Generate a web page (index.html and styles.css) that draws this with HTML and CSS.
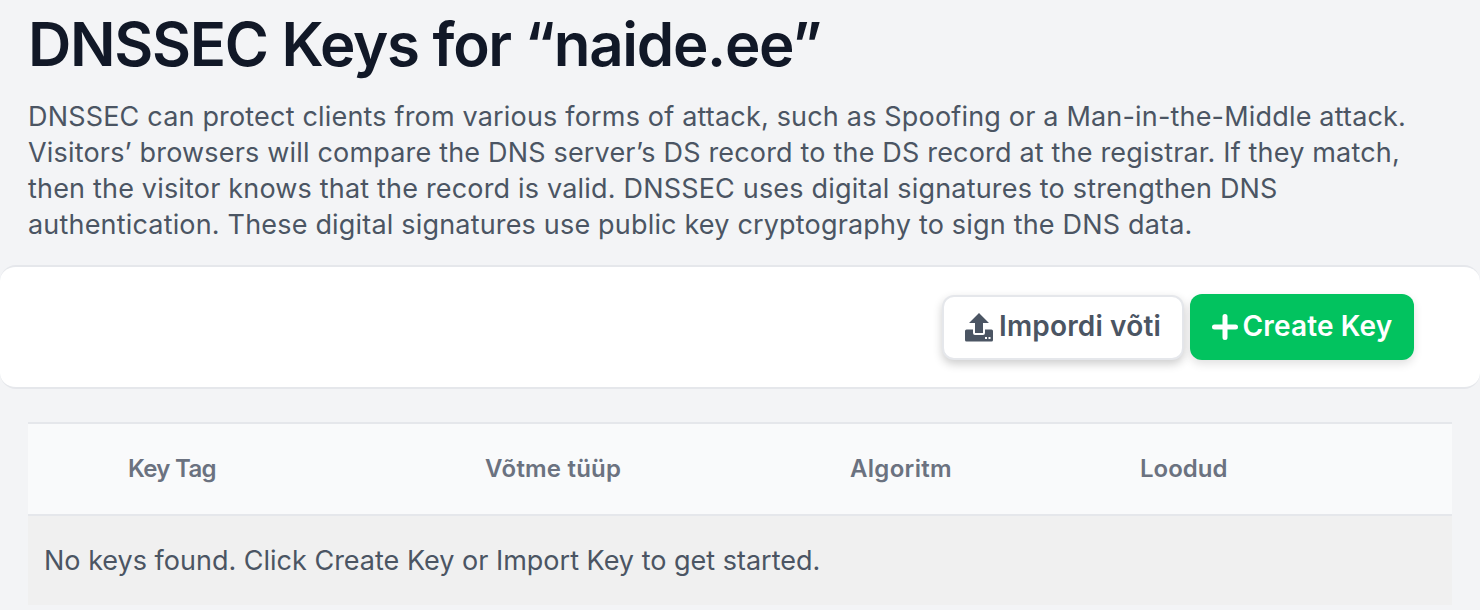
FILE: index.html
```html
<!DOCTYPE html>
<html lang="en">
<head>
<meta charset="utf-8">
<title>DNSSEC Keys</title>
<link rel="stylesheet" href="styles.css">
</head>
<body>
<header class="intro">
  <h1 class="title">DNSSEC Keys for “naide.ee”</h1>
  <p class="lead">DNSSEC can protect clients from various forms of attack, such as Spoofing or a Man-in-the-Middle attack.<br>Visitors’ browsers will compare the DNS server’s DS record to the DS record at the registrar. If they match,<br>then the visitor knows that the record is valid. DNSSEC uses digital signatures to strengthen DNS<br>authentication. These digital signatures use public key cryptography to sign the DNS data.</p>
</header>
<section class="toolbar">
  <button class="btn btn-light" type="button">
    <svg class="icon-upload" viewBox="0 0 28 29" aria-hidden="true"><path fill="#4b5563" d="M14 0 L24 10 L18 10 L18 20 L10 20 L10 10 L4 10 Z"/><path fill="#4b5563" fill-rule="evenodd" d="M1.5 16.5 H8 V20 Q8 22 10 22 H18 Q20 22 20 20 V16.5 H26.5 Q28 16.5 28 18 V27 Q28 28.5 26.5 28.5 H1.5 Q0 28.5 0 27 V18 Q0 16.5 1.5 16.5 Z M20 24 H22 V26 H20 Z M23.5 24 H25.5 V26 H23.5 Z"/></svg>
    <span>Impordi võti</span>
  </button>
  <button class="btn btn-green" type="button">
    <svg class="icon-plus" viewBox="0 0 26 26" aria-hidden="true"><path d="M13 2.5 V23.5 M2.5 13 H23.5" stroke="#fff" stroke-width="5" stroke-linecap="round" fill="none"/></svg>
    <span>Create Key</span>
  </button>
</section>
<section class="keys">
  <div class="keys-head">
    <div class="col col-tag">Key Tag</div>
    <div class="col col-type">Võtme tüüp</div>
    <div class="col col-algo">Algoritm</div>
    <div class="col col-date">Loodud</div>
  </div>
  <div class="keys-empty">No keys found. Click Create Key or Import Key to get started.</div>
</section>
</body>
</html>
```
FILE: styles.css
```css
* { box-sizing: border-box; }
html, body { margin: 0; height: 610px; overflow: hidden; }
body { background: #f3f4f6; font-family: Inter, "Noto Sans", sans-serif; color: #4b5563; }
.intro { padding: 8px 28px 0; height: 265px; }
.title { margin: 0; font-size: 60px; line-height: 72px; font-weight: 600; letter-spacing: -1.3px; color: #111827; }
.lead { margin: 19px 0 0; font-size: 27px; line-height: 36px; letter-spacing: .18px; color: #4b5563; white-space: nowrap; }
.toolbar { height: 124px; background: #fff; border: solid #e5e7eb; border-width: 2px 0; border-radius: 16px; display: flex; justify-content: flex-end; align-items: center; gap: 6px; padding-right: 66px; }
.btn { display: flex; align-items: center; height: 66px; border-radius: 12px; font-family: inherit; font-size: 28px; line-height: 34px; font-weight: 600; letter-spacing: .15px; cursor: pointer; }
.btn span { margin-bottom: 2px; }
.btn-light { width: 242px; height: 65px; justify-content: center; gap: 6px; padding: 0; background: #fff; color: #4b5563; border: 2px solid #e5e7eb; box-shadow: 0 4px 10px rgba(0,0,0,.2); }
.btn-green { width: 224px; justify-content: center; gap: 5px; padding: 0; background: #02c35f; color: #fff; border: 0; box-shadow: 0 4px 10px rgba(0,0,0,.12); }
.icon-upload { width: 28px; height: 29px; }
.icon-plus { width: 26px; height: 26px; }
.keys { margin: 33px 28px 0; }
.keys-head { height: 94px; padding-bottom: 2px; display: flex; align-items: center; background: #f9fafb; border-top: 2px solid #e5e7eb; border-bottom: 2px solid #e5e7eb; font-size: 24px; font-weight: 600; color: #6b7280; }
.col-tag { margin-left: 100px; width: 357px; letter-spacing: -.7px; }
.col-type { width: 365px; letter-spacing: .2px; }
.col-algo { width: 290px; letter-spacing: .3px; }
.keys-empty { height: 89px; padding: 0 16px; display: flex; align-items: center; background: #f0f0f0; font-size: 27px; color: #4b5563; }
```
